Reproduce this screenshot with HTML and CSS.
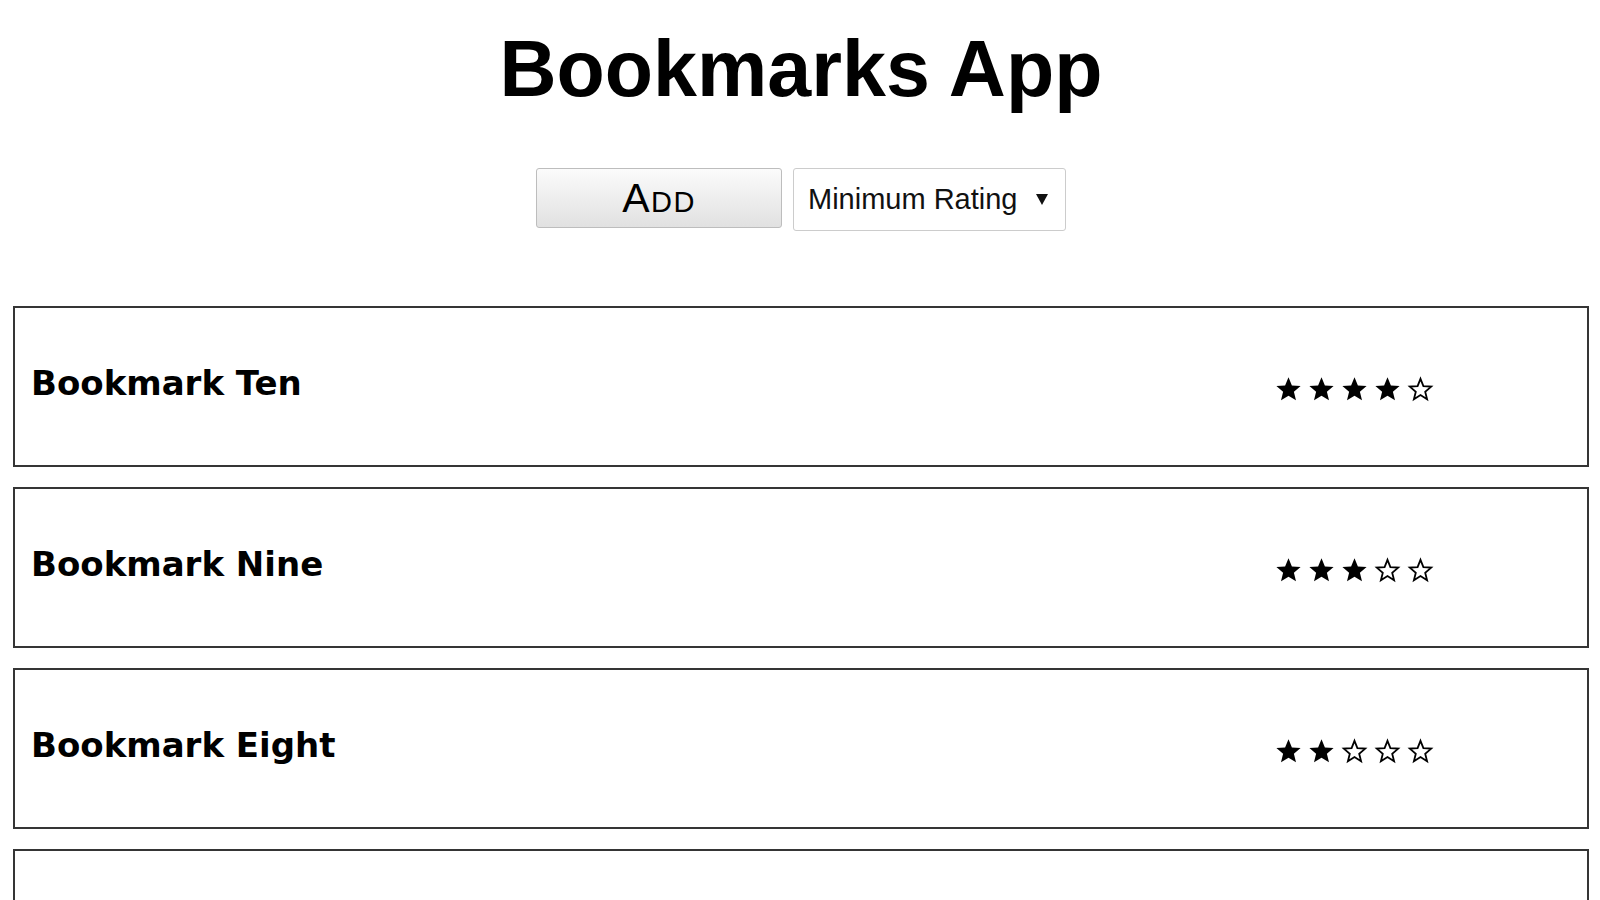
FILE: index.html
```html
<!DOCTYPE html>
<html lang="en">
<head>
<meta charset="utf-8">
<title>Bookmarks App</title>
<link rel="stylesheet" href="styles.css">
</head>
<body>
<div class="app">
  <h1 class="title">Bookmarks App</h1>
  <div class="toolbar">
    <button class="add-btn" type="button">Add</button>
    <div class="select">
      <span class="select-label">Minimum Rating</span>
      <svg class="select-arrow" width="12" height="11" viewBox="0 0 12 11"><polygon points="0,0 12,0 6,11" fill="#111"/></svg>
    </div>
  </div>
  <ul class="list">
    <li class="card">
      <span class="card-title">Bookmark Ten</span>
      <span class="stars">
        <svg class="star" viewBox="0 0 25 24"><polygon class="full" points="12.5,0.3 15.9,8.4 24.6,9 17.9,14.8 20,23.3 12.5,18.8 5,23.3 7.1,14.8 0.4,9 9.1,8.4"/></svg>
        <svg class="star" viewBox="0 0 25 24"><polygon class="full" points="12.5,0.3 15.9,8.4 24.6,9 17.9,14.8 20,23.3 12.5,18.8 5,23.3 7.1,14.8 0.4,9 9.1,8.4"/></svg>
        <svg class="star" viewBox="0 0 25 24"><polygon class="full" points="12.5,0.3 15.9,8.4 24.6,9 17.9,14.8 20,23.3 12.5,18.8 5,23.3 7.1,14.8 0.4,9 9.1,8.4"/></svg>
        <svg class="star" viewBox="0 0 25 24"><polygon class="full" points="12.5,0.3 15.9,8.4 24.6,9 17.9,14.8 20,23.3 12.5,18.8 5,23.3 7.1,14.8 0.4,9 9.1,8.4"/></svg>
        <svg class="star" viewBox="0 0 25 24"><polygon class="empty" points="12.5,1.8 15.4,9.1 23.2,9.6 17.2,14.7 19.1,22.2 12.5,18.1 5.9,22.2 7.8,14.7 1.8,9.6 9.6,9.1"/></svg>
      </span>
    </li>
    <li class="card">
      <span class="card-title">Bookmark Nine</span>
      <span class="stars">
        <svg class="star" viewBox="0 0 25 24"><polygon class="full" points="12.5,0.3 15.9,8.4 24.6,9 17.9,14.8 20,23.3 12.5,18.8 5,23.3 7.1,14.8 0.4,9 9.1,8.4"/></svg>
        <svg class="star" viewBox="0 0 25 24"><polygon class="full" points="12.5,0.3 15.9,8.4 24.6,9 17.9,14.8 20,23.3 12.5,18.8 5,23.3 7.1,14.8 0.4,9 9.1,8.4"/></svg>
        <svg class="star" viewBox="0 0 25 24"><polygon class="full" points="12.5,0.3 15.9,8.4 24.6,9 17.9,14.8 20,23.3 12.5,18.8 5,23.3 7.1,14.8 0.4,9 9.1,8.4"/></svg>
        <svg class="star" viewBox="0 0 25 24"><polygon class="empty" points="12.5,1.8 15.4,9.1 23.2,9.6 17.2,14.7 19.1,22.2 12.5,18.1 5.9,22.2 7.8,14.7 1.8,9.6 9.6,9.1"/></svg>
        <svg class="star" viewBox="0 0 25 24"><polygon class="empty" points="12.5,1.8 15.4,9.1 23.2,9.6 17.2,14.7 19.1,22.2 12.5,18.1 5.9,22.2 7.8,14.7 1.8,9.6 9.6,9.1"/></svg>
      </span>
    </li>
    <li class="card">
      <span class="card-title">Bookmark Eight</span>
      <span class="stars">
        <svg class="star" viewBox="0 0 25 24"><polygon class="full" points="12.5,0.3 15.9,8.4 24.6,9 17.9,14.8 20,23.3 12.5,18.8 5,23.3 7.1,14.8 0.4,9 9.1,8.4"/></svg>
        <svg class="star" viewBox="0 0 25 24"><polygon class="full" points="12.5,0.3 15.9,8.4 24.6,9 17.9,14.8 20,23.3 12.5,18.8 5,23.3 7.1,14.8 0.4,9 9.1,8.4"/></svg>
        <svg class="star" viewBox="0 0 25 24"><polygon class="empty" points="12.5,1.8 15.4,9.1 23.2,9.6 17.2,14.7 19.1,22.2 12.5,18.1 5.9,22.2 7.8,14.7 1.8,9.6 9.6,9.1"/></svg>
        <svg class="star" viewBox="0 0 25 24"><polygon class="empty" points="12.5,1.8 15.4,9.1 23.2,9.6 17.2,14.7 19.1,22.2 12.5,18.1 5.9,22.2 7.8,14.7 1.8,9.6 9.6,9.1"/></svg>
        <svg class="star" viewBox="0 0 25 24"><polygon class="empty" points="12.5,1.8 15.4,9.1 23.2,9.6 17.2,14.7 19.1,22.2 12.5,18.1 5.9,22.2 7.8,14.7 1.8,9.6 9.6,9.1"/></svg>
      </span>
    </li>
    <li class="card card-cut"></li>
  </ul>
</div>
</body>
</html>
```

FILE: styles.css
```css
html {
  overflow: hidden;
}

body {
  margin: 0;
  background: #ffffff;
  color: #000000;
  font-family: "Liberation Sans", Arial, sans-serif;
}

.app {
  padding: 0 11px 0 13px;
}

.title {
  margin: 24px 0 0;
  font-size: 79px;
  line-height: 90px;
  font-weight: bold;
  text-align: center;
}

.toolbar {
  display: flex;
  justify-content: center;
  align-items: flex-start;
  gap: 11px;
  margin-top: 54px;
}

.add-btn {
  box-sizing: border-box;
  width: 246px;
  height: 60px;
  margin: 0;
  padding: 0;
  border: 1px solid #bdbdbd;
  border-radius: 3px;
  background: linear-gradient(#fbfbfb, #e1e1e1);
  color: #000;
  font-family: "Liberation Sans", Arial, sans-serif;
  font-size: 41px;
  font-variant: small-caps;
  letter-spacing: 1.5px;
  line-height: 1;
}

.select {
  box-sizing: border-box;
  width: 273px;
  height: 63px;
  display: flex;
  align-items: center;
  justify-content: space-between;
  padding: 0 17px 0 14px;
  border: 1px solid #cccccc;
  border-radius: 3px;
  background: #fff;
}

.select-label {
  font-size: 29px;
  color: #111;
}

.select-arrow {
  display: block;
}

.list {
  list-style: none;
  margin: 75px 0 0;
  padding: 0;
}

.card {
  box-sizing: border-box;
  height: 161px;
  margin-bottom: 20px;
  border: 2px solid #353535;
  display: flex;
  align-items: center;
  justify-content: space-between;
  padding: 0 154px 0 16px;
}

.card-title {
  font-family: "DejaVu Sans", Verdana, sans-serif;
  font-size: 34px;
  font-weight: bold;
  margin-bottom: 8px;
}

.stars {
  display: flex;
  gap: 8px;
  margin-top: 5px;
}

.star {
  display: block;
  width: 25px;
  height: 24px;
  overflow: visible;
}

.star .full {
  fill: #000;
}

.star .empty {
  fill: #fff;
  stroke: #000;
  stroke-width: 1.8;
  stroke-linejoin: miter;
}
```
